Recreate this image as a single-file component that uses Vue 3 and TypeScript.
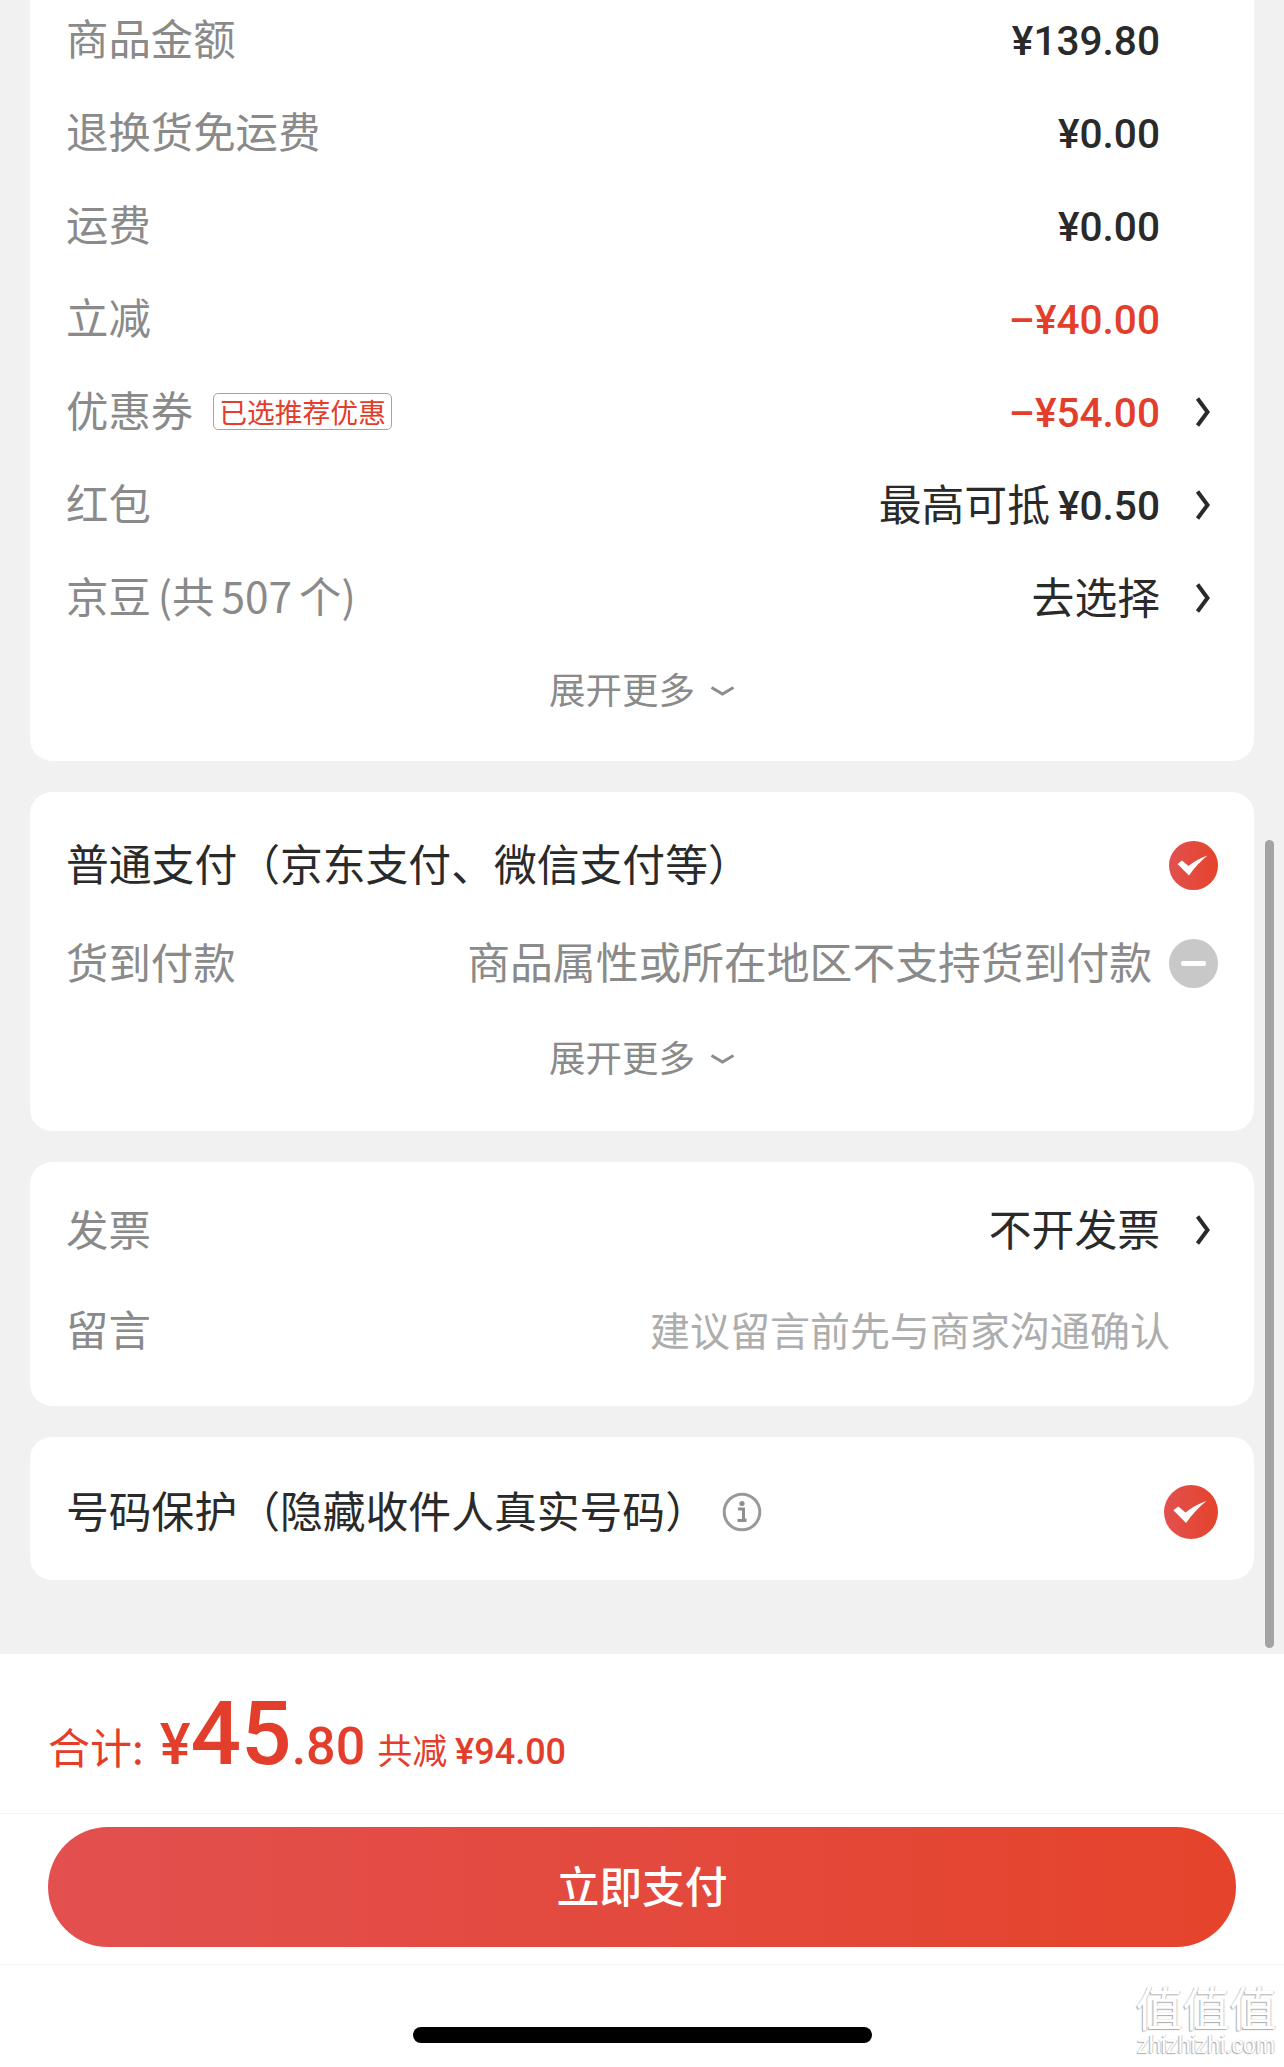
<script setup lang="ts">
interface PriceRow {
  label: string
  value?: string
  text?: string
  tag?: string
  red?: boolean
  arrow?: boolean
}

const priceRows: PriceRow[] = [
  { label: '商品金额', value: '¥139.80' },
  { label: '退换货免运费', value: '¥0.00' },
  { label: '运费', value: '¥0.00' },
  { label: '立减', value: '–¥40.00', red: true },
  { label: '优惠券', value: '–¥54.00', tag: '已选推荐优惠', red: true, arrow: true },
  { label: '红包', text: '最高可抵', value: '¥0.50', arrow: true },
  { label: '京豆 (共 507 个)', text: '去选择', arrow: true }
]
</script>

<template>
  <div class="page">
    <main class="content">
      <section class="card card-price">
        <div v-for="row in priceRows" :key="row.label" class="row price-row">
          <span class="label">{{ row.label }}</span>
          <span v-if="row.tag" class="tag">{{ row.tag }}</span>
          <span v-if="row.text" class="value-text">{{ row.text }}</span>
          <span v-if="row.value" class="value" :class="{ red: row.red, joined: row.text }">{{ row.value }}</span>
          <span class="arrow-slot">
            <svg v-if="row.arrow" width="17" height="30" viewBox="0 0 17 30">
              <path d="M2.5 1.5 L12.5 15 L2.5 28.5" fill="none" stroke="#2a2a2a" stroke-width="4" />
            </svg>
          </span>
        </div>
        <div class="more">
          <span>展开更多</span>
          <svg width="25" height="12" viewBox="0 0 25 12">
            <path d="M1.5 2.5 L12.5 9 L23.5 2.5" fill="none" stroke="#8c8c8c" stroke-width="3" />
          </svg>
        </div>
      </section>

      <section class="card card-pay">
        <div class="row pay-row">
          <span class="label dark">普通支付（京东支付、微信支付等）</span>
          <span class="badge check">
            <svg width="49" height="49" viewBox="0 0 49 49">
              <path d="M8.5 23 L13 19.5 L19.5 25 Q28 18 38.5 14.5 Q28 23 20 34.5 Z" fill="#fff" />
            </svg>
          </span>
        </div>
        <div class="row pay-row">
          <span class="label">货到付款</span>
          <span class="pay-note">商品属性或所在地区不支持货到付款</span>
          <span class="badge off"><i></i></span>
        </div>
        <div class="more">
          <span>展开更多</span>
          <svg width="25" height="12" viewBox="0 0 25 12">
            <path d="M1.5 2.5 L12.5 9 L23.5 2.5" fill="none" stroke="#8c8c8c" stroke-width="3" />
          </svg>
        </div>
      </section>

      <section class="card card-invoice">
        <div class="row invoice-row">
          <span class="label">发票</span>
          <span class="value-text">不开发票</span>
          <span class="arrow-slot">
            <svg width="17" height="30" viewBox="0 0 17 30">
              <path d="M2.5 1.5 L12.5 15 L2.5 28.5" fill="none" stroke="#2a2a2a" stroke-width="4" />
            </svg>
          </span>
        </div>
        <div class="row invoice-row">
          <span class="label">留言</span>
          <span class="placeholder">建议留言前先与商家沟通确认</span>
        </div>
      </section>

      <section class="card card-protect">
        <div class="row protect-row">
          <span class="label dark">号码保护（隐藏收件人真实号码）</span>
          <svg class="info" width="40" height="40" viewBox="0 0 40 40">
            <circle cx="20" cy="20" r="17.8" fill="none" stroke="#999" stroke-width="3" />
            <circle cx="20" cy="11.5" r="2.6" fill="#8f8f8f" />
            <path d="M16 17 H21.5 V28 H24.5 M15.5 28.6 H24.5" fill="none" stroke="#8f8f8f" stroke-width="3" />
          </svg>
          <span class="badge check big">
            <svg width="54" height="54" viewBox="0 0 49 49">
              <path d="M8.5 23 L13 19.5 L19.5 25 Q28 18 38.5 14.5 Q28 23 20 34.5 Z" fill="#fff" />
            </svg>
          </span>
        </div>
      </section>

      <div class="scrollbar"></div>
    </main>

    <footer class="footer">
      <div class="total">
        <span class="total-label">合计:</span>
        <span class="total-price">
          <span class="yen">¥</span><span class="int">45</span><span class="dec">.80</span>
        </span>
        <span class="saved">共减 <b>¥94.00</b></span>
      </div>
      <div class="action">
        <button class="pay-btn">立即支付</button>
      </div>
      <div class="home">
        <div class="home-bar"></div>
        <div class="watermark">
          <span class="wm-logo">值值值</span>
          <span class="wm-url">zhizhizhi.com</span>
        </div>
      </div>
    </footer>
  </div>
</template>

<style>
html,
body {
  margin: 0;
  background: #fff;
}
</style>

<style scoped>
.page {
  width: 1284px;
  height: 2067px;
  display: flex;
  flex-direction: column;
  overflow: hidden;
  font-family: Roboto, "Noto Sans CJK SC", sans-serif;
  color: #2a2a2a;
  background: #fff;
}
.content {
  position: relative;
  height: 1654px;
  flex: none;
  box-sizing: border-box;
  padding: 0 30px;
  background: #f1f1f1;
  overflow: hidden;
  display: flex;
  flex-direction: column;
  gap: 31px;
}
.card {
  background: #fff;
  border-radius: 22px;
  padding: 24px 36px;
}
.card-price {
  margin-top: -31px;
}
.card-pay {
  padding-bottom: 26px;
}
.card-invoice {
  padding-top: 18px;
  padding-bottom: 26px;
}
.card-protect {
  padding-top: 25px;
  padding-bottom: 18px;
}
.row {
  display: flex;
  align-items: center;
  font-size: 42.8px;
}
.price-row {
  height: 93px;
}
.pay-row {
  height: 98px;
}
.invoice-row,
.protect-row {
  height: 100px;
}
.label,
.value-text,
.pay-note {
  font-family: "Noto Sans CJK SC", sans-serif;
  font-weight: 400;
  padding-bottom: 6px;
}
.label {
  font-size: 42.4px;
  word-spacing: -2.5px;
  color: #8a8a8a;
}
.label.dark {
  font-size: 42.8px;
  color: #2a2a2a;
}
.tag {
  margin-left: 20px;
  height: 37px;
  box-sizing: border-box;
  padding: 0 5px;
  display: flex;
  align-items: center;
  font-family: "Noto Sans CJK SC", sans-serif;
  font-weight: 400;
  font-size: 27.8px;
  line-height: 1;
  color: #e33e2b;
  border: 1px solid #e58a7e;
  border-radius: 5px;
}
.value-text {
  margin-left: auto;
  color: #2a2a2a;
}
.value {
  margin-left: auto;
  padding-top: 2px;
  font-size: 40.6px;
  font-weight: 500;
  color: #2a2a2a;
}
.value.joined {
  margin-left: 8px;
}
.value.red {
  color: #e33e2b;
}
.arrow-slot {
  flex: none;
  width: 58px;
  display: flex;
  justify-content: flex-end;
  padding-right: 6px;
  box-sizing: border-box;
}
.more {
  height: 93px;
  display: flex;
  align-items: center;
  justify-content: center;
  gap: 15px;
  padding-bottom: 4px;
  box-sizing: border-box;
  font-family: "Noto Sans CJK SC", sans-serif;
  font-weight: 400;
  font-size: 36.5px;
  color: #8a8a8a;
}
.more svg {
  margin-top: 4px;
}
.badge {
  flex: none;
  width: 49px;
  height: 49px;
  border-radius: 50%;
  display: flex;
  align-items: center;
  justify-content: center;
}
.badge.big {
  width: 54px;
  height: 54px;
  margin-left: auto;
}
.check {
  background: linear-gradient(90deg, #e2504f, #e5432b);
}
.pay-row .check {
  margin-left: auto;
}
.off {
  background: #c8c8c8;
  margin-left: 17px;
}
.off i {
  display: block;
  width: 25px;
  height: 5px;
  border-radius: 2px;
  background: #fff;
}
.pay-note {
  margin-left: auto;
  color: #8a8a8a;
}
.placeholder {
  margin-left: auto;
  margin-right: 48px;
  padding-bottom: 2px;
  font-family: "Noto Sans CJK SC", sans-serif;
  font-weight: 400;
  font-size: 40px;
  color: #adadad;
}
.info {
  margin-left: 14px;
}
.scrollbar {
  position: absolute;
  left: 1265px;
  top: 840px;
  width: 9px;
  height: 808px;
  border-radius: 5px;
  background: #a3a3a3;
}
.footer {
  flex: 1;
  display: flex;
  flex-direction: column;
  background: #fff;
}
.total {
  height: 160px;
  box-sizing: border-box;
  padding: 35px 48px 6px;
  border-bottom: 1px solid #f3f3f3;
  display: flex;
  align-items: baseline;
  color: #e33e2b;
}
.total-label {
  font-family: "Noto Sans CJK SC", sans-serif;
  font-weight: 400;
  font-size: 42px;
}
.total-price {
  margin-left: 16px;
  font-weight: 500;
}
.yen {
  font-size: 58px;
}
.int {
  font-size: 89px;
  line-height: 1;
}
.dec {
  font-size: 52px;
}
.saved {
  margin-left: 12px;
  font-family: "Noto Sans CJK SC", sans-serif;
  font-weight: 400;
  font-size: 35px;
}
.saved b {
  font-family: Roboto, sans-serif;
  font-size: 36px;
  font-weight: 500;
}
.action {
  padding: 13px 48px 17px;
  border-bottom: 1px solid #f3f3f3;
}
.pay-btn {
  display: block;
  width: 100%;
  height: 120px;
  padding: 0 0 6px;
  border: none;
  border-radius: 60px;
  background: linear-gradient(90deg, #e2504f, #e5432b);
  color: #fff;
  font-family: "Noto Sans CJK SC", sans-serif;
  font-size: 42.8px;
  font-weight: 500;
}
.home {
  position: relative;
  flex: 1;
}
.home-bar {
  position: absolute;
  left: 413px;
  top: 62px;
  width: 459px;
  height: 16px;
  border-radius: 8px;
  background: #000;
}
.watermark {
  position: absolute;
  left: 1130px;
  top: 14px;
  width: 152px;
  display: flex;
  flex-direction: column;
  align-items: center;
  color: #fff;
  text-shadow: -1px 1px 1px #aaa, 1px 0 1px #ccc;
}
.wm-logo {
  font-family: "Noto Sans CJK SC", sans-serif;
  font-size: 47px;
  line-height: 54px;
}
.wm-url {
  font-family: "Liberation Sans", sans-serif;
  font-size: 23px;
  line-height: 24px;
  white-space: nowrap;
}
</style>
